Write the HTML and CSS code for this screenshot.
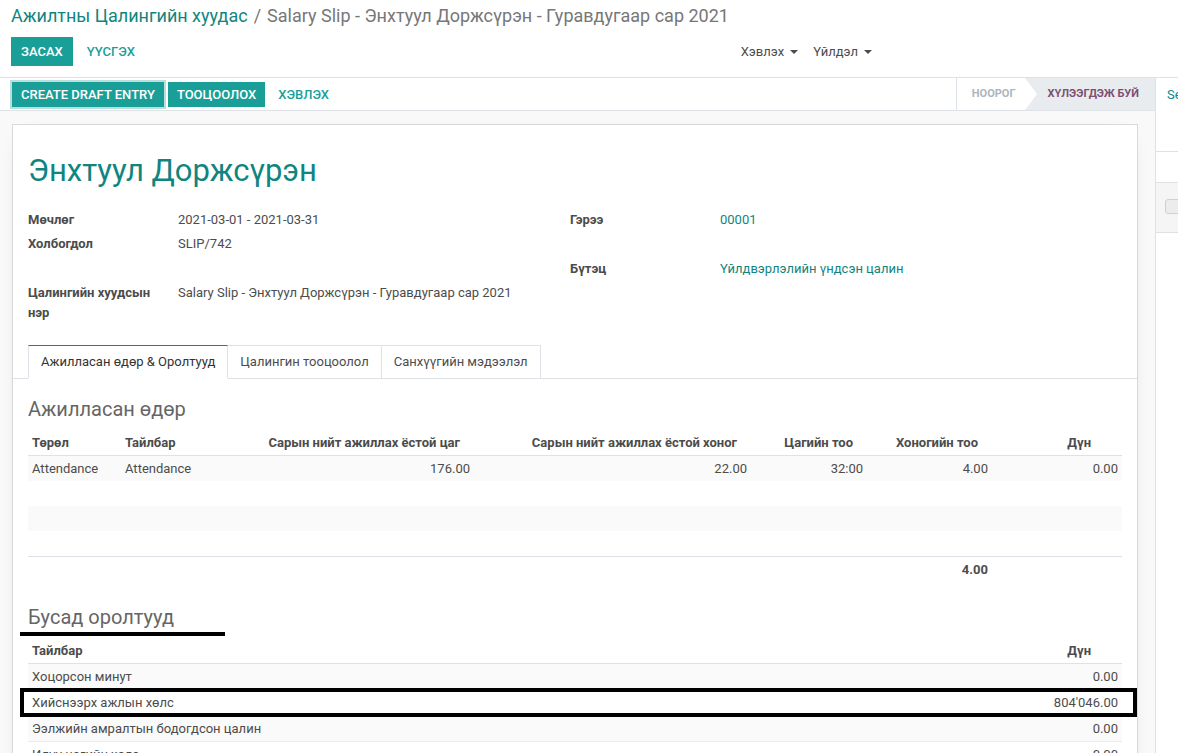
FILE: index.html
```html
<!DOCTYPE html>
<html lang="mn">
<head>
<meta charset="utf-8">
<title>Salary Slip</title>
<link rel="stylesheet" href="styles.css">
</head>
<body>
<div class="cp">
  <div class="breadcrumb">
    <span class="bc-link">Ажилтны Цалингийн хуудас</span><span class="bc-sep">/</span><span class="bc-active">Salary Slip - Энхтуул Доржсүрэн - Гуравдугаар сар 2021</span>
  </div>
  <div class="cp-bottom">
    <button class="btn btn-primary">Засах</button>
    <button class="btn btn-link">Үүсгэх</button>
    <div class="cp-actions">
      <span class="dd">Хэвлэх<i class="caret"></i></span>
      <span class="dd">Үйлдэл<i class="caret"></i></span>
    </div>
  </div>
</div>
<div class="main">
  <div class="form">
    <div class="statusbar">
      <button class="btn btn-primary btn-sm btn-focus">Create Draft Entry</button>
      <button class="btn btn-primary btn-sm">Тооцоолох</button>
      <button class="btn btn-link btn-sm">Хэвлэх</button>
      <div class="status">
        <span class="st st-draft">Ноорог</span>
        <span class="st st-active">Хүлээгдэж буй</span>
      </div>
    </div>
    <div class="sheet-bg">
      <div class="sheet">
        <h1 class="title">Энхтуул Доржсүрэн</h1>
        <div class="groups">
          <div class="group">
            <div class="row"><div class="lbl">Мөчлөг</div><div class="val">2021-03-01 - 2021-03-31</div></div>
            <div class="row"><div class="lbl">Холбогдол</div><div class="val">SLIP/742</div></div>
            <div class="row"><div class="lbl">&nbsp;</div><div class="val"></div></div>
            <div class="row"><div class="lbl">Цалингийн хуудсын нэр</div><div class="val">Salary Slip - Энхтуул Доржсүрэн - Гуравдугаар сар 2021</div></div>
          </div>
          <div class="group">
            <div class="row"><div class="lbl">Гэрээ</div><div class="val link">00001</div></div>
            <div class="row"><div class="lbl">&nbsp;</div><div class="val"></div></div>
            <div class="row"><div class="lbl">Бүтэц</div><div class="val link">Үйлдвэрлэлийн үндсэн цалин</div></div>
          </div>
        </div>
        <div class="tabs">
          <span class="tab active">Ажилласан өдөр &amp; Оролтууд</span>
          <span class="tab">Цалингин тооцоолол</span>
          <span class="tab">Санхүүгийн мэдээлэл</span>
        </div>
        <h3 class="sec first">Ажилласан өдөр</h3>
        <table class="list">
          <thead>
            <tr>
              <th class="w1">Төрөл</th>
              <th class="w2">Тайлбар</th>
              <th class="w3 num">Сарын нийт ажиллах ёстой цаг</th>
              <th class="w4 num">Сарын нийт ажиллах ёстой хоног</th>
              <th class="w5 num">Цагийн тоо</th>
              <th class="w6 num">Хоногийн тоо</th>
              <th class="w7 num last">Дүн</th>
            </tr>
          </thead>
          <tbody>
            <tr class="odd"><td>Attendance</td><td>Attendance</td><td class="num">176.00</td><td class="num">22.00</td><td class="num">32:00</td><td class="num">4.00</td><td class="num">0.00</td></tr>
            <tr class="fill"><td>&nbsp;</td><td></td><td></td><td></td><td></td><td></td><td></td></tr>
            <tr class="fill odd"><td>&nbsp;</td><td></td><td></td><td></td><td></td><td></td><td></td></tr>
            <tr class="fill"><td>&nbsp;</td><td></td><td></td><td></td><td></td><td></td><td></td></tr>
          </tbody>
          <tfoot>
            <tr><td>&nbsp;</td><td></td><td></td><td></td><td></td><td class="num">4.00</td><td></td></tr>
          </tfoot>
        </table>
        <h3 class="sec">Бусад оролтууд</h3>
        <div class="list-wrap">
          <table class="list list2">
            <thead>
              <tr><th class="wa">Тайлбар</th><th class="w7 num last">Дүн</th></tr>
            </thead>
            <tbody>
              <tr class="odd"><td>Хоцорсон минут</td><td class="num">0.00</td></tr>
              <tr class="data"><td>Хийснээрх ажлын хөлс</td><td class="num">804'046.00</td></tr>
              <tr class="odd data"><td>Ээлжийн амралтын бодогдсон цалин</td><td class="num">0.00</td></tr>
              <tr class="data"><td>Илүү цагийн хөлс</td><td class="num">0.00</td></tr>
            </tbody>
          </table>
          <div class="mark-line"></div>
          <div class="mark-box"></div>
        </div>
      </div>
    </div>
  </div>
  <div class="chatter">
    <div class="ch-top"><span class="ch-btn">Send message</span></div>
    <div class="ch-gap"></div>
    <div class="ch-band"><span class="ch-chip"></span></div>
  </div>
</div>
</body>
</html>
```
FILE: styles.css
```css
* { box-sizing: border-box; }
html, body { margin: 0; padding: 0; }
body {
  width: 1178px;
  height: 753px;
  overflow: hidden;
  font-family: Roboto, "Noto Sans", sans-serif;
  font-size: 13px;
  line-height: 1.5;
  color: #4c4c4c;
  background: #fff;
}

/* control panel */
.cp {
  height: 78px;
  border-bottom: 1px solid #dee2e6;
  padding: 5px 11px 0;
}
.breadcrumb {
  display: flex;
  white-space: nowrap;
  font-size: 18px;
  line-height: 22px;
  height: 22px;
}
.bc-link { color: #10857f; }
.bc-sep { color: #777; padding: 0 6px; }
.bc-active { color: #777; }
.cp-bottom {
  display: flex;
  align-items: center;
  margin-top: 10px;
  height: 29px;
}
.btn {
  font-family: inherit;
  font-size: 13px;
  font-weight: 500;
  text-transform: uppercase;
  height: 29px;
  line-height: 27px;
  padding: 0 9px;
  border: 1px solid transparent;
  border-radius: 0;
  background: transparent;
  margin: 0 4px 0 0;
  cursor: pointer;
}
.btn-primary { background: #1a9f98; border-color: #1a9f98; color: #fff; }
.btn-link { color: #1a9f98; }
.btn-sm { height: 25px; line-height: 23px; padding: 0 8px; }
.btn-focus { box-shadow: 0 0 0 2px #b9dfdc; }
.cp-actions {
  margin-left: auto;
  margin-right: 295px;
  display: flex;
  align-items: center;
}
.dd { display: flex; align-items: center; margin-left: 15px; color: #4c4c4c; }
.caret {
  display: inline-block;
  margin-left: 6px;
  width: 0; height: 0;
  border-left: 4px solid transparent;
  border-right: 4px solid transparent;
  border-top: 4px solid #4c4c4c;
}

/* main */
.main { display: flex; height: 675px; }
.form { flex: 1; min-width: 0; display: flex; flex-direction: column; }
.statusbar {
  height: 33px;
  border-bottom: 1px solid #dee2e6;
  padding-left: 12px;
  display: flex;
  align-items: center;
}
.status { margin-left: auto; display: flex; height: 32px; align-self: flex-start; }
.st {
  position: relative;
  height: 32px;
  line-height: 32px;
  font-size: 11px;
  font-weight: 700;
  text-transform: uppercase;
  white-space: nowrap;
}
.st-draft {
  color: #adb5bd;
  border-left: 1px solid #dee2e6;
  padding: 0 9px 0 15px;
  background: #fff;
}
.st-draft::after {
  content: "";
  position: absolute;
  left: 100%;
  top: 0;
  width: 0; height: 0;
  border-top: 16px solid transparent;
  border-bottom: 16px solid transparent;
  border-left: 12px solid #fff;
  z-index: 1;
}
.st-active {
  color: #7e4f72;
  background: #e9ecef;
  padding: 0 16px 0 23px;
}

.sheet-bg {
  flex: 1;
  background: #f9f9f9;
  padding: 13px 17px 0 12px;
  overflow: hidden;
}
.sheet {
  background: #fff;
  border: 1px solid #d9d9d9;
  box-shadow: 0 5px 20px -15px rgba(0,0,0,0.4);
  padding: 0 15px 40px;
}
.title {
  margin: 27px 0 18px;
  font-size: 31px;
  line-height: 37px;
  font-weight: 400;
  color: #10857f;
}
.groups { display: grid; grid-template-columns: 542px 1fr; }
.row { display: grid; grid-template-columns: 150px 1fr; padding: 2.5px 0; line-height: 19.5px; }
.lbl { font-weight: 700; color: #4c4c4c; padding-right: 10px; }
.val { color: #4c4c4c; }
.link { color: #10857f; }

.tabs {
  display: flex;
  margin: 20px -15px 0;
  padding: 0 15px;
  border-bottom: 1px solid #dee2e6;
}
.tab {
  height: 34px;
  line-height: 32px;
  padding: 0 12px;
  margin-bottom: -1px;
  border: 1px solid #dee2e6;
  margin-right: -1px;
  color: #4c4c4c;
  background: #fff;
}
.tab.active {
  border-top-color: #6e5a6c;
  border-bottom-color: #fff;
  color: #333;
  position: relative;
  z-index: 1;
}

.sec {
  margin: 23px 0 9px;
  font-size: 20px;
  line-height: 24px;
  font-weight: 400;
  color: #666;
}
.sec.first { margin-top: 18px; }

.list {
  width: 100%;
  table-layout: fixed;
  border-collapse: separate;
  border-spacing: 0;
}
.list th, .list td {
  padding: 3px 4px;
  line-height: 19px;
  white-space: nowrap;
  overflow: hidden;
  text-align: left;
}
.list th {
  font-weight: 700;
  color: #4c4c4c;
  border-bottom: 1px solid #dee2e6;
}
.list td { color: #4c4c4c; }
.list .num { text-align: right; }
.list th.num { padding-right: 14px; }
.list th.last { padding-right: 31px; }
.list tr.odd td { background: #fafafa; }
.list tfoot td { border-top: 1px solid #dee2e6; font-weight: 700; }
.list2 tr.data td { border-top: 1px solid #e9ecef; }
.w1 { width: 93px; }
.w2 { width: 133px; }
.w3 { width: 220px; }
.w4 { width: 277px; }
.w5 { width: 116px; }
.w6 { width: 125px; }
.w7 { width: 130px; }
.wa { width: auto; }

.list-wrap { position: relative; }
.mark-line {
  position: absolute;
  left: -8px;
  top: -6px;
  width: 205px;
  height: 4px;
  background: #000;
}
.mark-box {
  position: absolute;
  left: -8px;
  top: 50px;
  width: 1117px;
  height: 29px;
  border: 4px solid #000;
}

/* chatter */
.chatter {
  width: 23px;
  border-left: 1px solid #dee2e6;
  overflow: hidden;
  background: #fff;
}
.ch-top {
  height: 74px;
  border-bottom: 1px solid #dee2e6;
  padding: 7px 0 0 11px;
  white-space: nowrap;
}
.ch-btn { color: #10857f; line-height: 19px; }
.ch-gap { height: 30px; }
.ch-band {
  height: 51px;
  border-top: 1px solid #dee2e6;
  border-bottom: 1px solid #dee2e6;
  background: #f5f5f5;
  padding: 16px 0 0 9px;
}
.ch-chip {
  display: block;
  width: 20px;
  height: 15px;
  border: 1px solid #d0d0d0;
  border-radius: 3px;
  background: #ececec;
}
```
